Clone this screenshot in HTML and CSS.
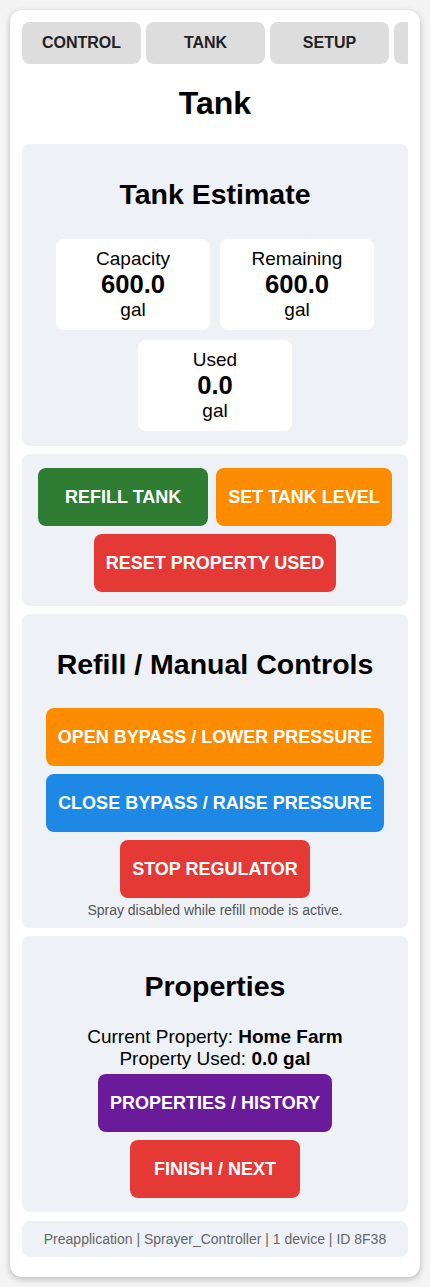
FILE: index.html
```html
<!DOCTYPE html>
<html lang="en">
<head>
  <meta charset="utf-8" />
  <title>Sprayer Controller - Tank</title>
  <meta name="viewport" content="width=device-width, initial-scale=1" />
  <link rel="stylesheet" href="styles.css">
</head>
<body>
  <div class="app">
    <div class="tabs">
      <button class="tab">CONTROL</button>
      <button class="tab active">TANK</button>
      <button class="tab">SETUP</button>
      <button class="tab">LOGS</button>
    </div>

    <h1>Tank</h1>

    <div class="card">
      <h2>Tank Estimate</h2>
      <div class="stats">
        <div class="stat">
          <div class="stat-label">Capacity</div>
          <div class="stat-value">600.0</div>
          <div class="stat-unit">gal</div>
        </div>
        <div class="stat">
          <div class="stat-label">Remaining</div>
          <div class="stat-value">600.0</div>
          <div class="stat-unit">gal</div>
        </div>
        <div class="stat">
          <div class="stat-label">Used</div>
          <div class="stat-value">0.0</div>
          <div class="stat-unit">gal</div>
        </div>
      </div>
    </div>

    <div class="card">
      <div class="btn-row">
        <button class="btn green">REFILL TANK</button>
        <button class="btn orange">SET TANK LEVEL</button>
        <button class="btn red">RESET PROPERTY USED</button>
      </div>
    </div>

    <div class="card">
      <h2>Refill / Manual Controls</h2>
      <div class="btn-row">
        <button class="btn orange">OPEN BYPASS / LOWER PRESSURE</button>
        <button class="btn blue">CLOSE BYPASS / RAISE PRESSURE</button>
        <button class="btn red">STOP REGULATOR</button>
      </div>
      <div class="note">Spray disabled while refill mode is active.</div>
    </div>

    <div class="card">
      <h2>Properties</h2>
      <div class="info">Current Property: <b>Home Farm</b></div>
      <div class="info">Property Used: <b>0.0 gal</b></div>
      <div class="btn-row">
        <button class="btn purple">PROPERTIES / HISTORY</button>
        <button class="btn red">FINISH / NEXT</button>
      </div>
    </div>

    <div class="footer">Preapplication | Sprayer_Controller | 1 device | ID 8F38</div>
  </div>
</body>
</html>
```

FILE: styles.css
```css
body {
  background: #f4f4f4;
  font-family: "Liberation Sans", Arial, sans-serif;
  color: #000;
  margin: 0;
  padding: 10px;
}
.app {
  background: #fff;
  border-radius: 12px;
  box-shadow: 0 2px 6px rgba(0,0,0,.25);
  padding: 12px 12px 20px;
}
.tabs {
  display: flex;
  gap: 5px;
  overflow: hidden;
}
.tab {
  flex: 0 0 119px;
  height: 42px;
  background: #ddd;
  border: none;
  border-radius: 8px;
  font-family: inherit;
  font-weight: bold;
  font-size: 16px;
  color: #222;
  padding: 0;
}
h1 {
  font-size: 32px;
  text-align: center;
  margin: 21px 0 22px;
}
.card {
  background: #eef2f6;
  border-radius: 8px;
  padding: 10px;
  margin-bottom: 8px;
  text-align: center;
}
.card h2 {
  font-size: 28.5px;
  margin: 24px 0 23px;
}
.stats {
  display: flex;
  flex-wrap: wrap;
  justify-content: center;
}
.stat {
  width: 154px;
  margin: 5px;
  background: #fff;
  border-radius: 8px;
  padding: 9px 0;
}
.stat-label, .stat-unit {
  font-size: 19px;
}
.stat-value {
  font-size: 25.6px;
  font-weight: bold;
}
.btn-row {
  display: flex;
  flex-wrap: wrap;
  justify-content: center;
}
.btn {
  min-width: 170px;
  margin: 4px;
  padding: 18px 12px;
  border: none;
  border-radius: 8px;
  color: #fff;
  font-family: inherit;
  font-weight: bold;
  font-size: 18px;
  line-height: 22px;
}
.green { background: #2e7d32; }
.orange { background: #fb8c00; }
.red { background: #e53935; }
.blue { background: #1e88e5; }
.purple { background: #6a1b9a; }
.note {
  font-size: 14px;
  color: #555;
}
.info {
  font-size: 19px;
}
.footer {
  background: #eef2f6;
  border-radius: 8px;
  margin-top: 9px;
  padding: 10px;
  text-align: center;
  font-size: 14px;
  color: #666;
}
```
